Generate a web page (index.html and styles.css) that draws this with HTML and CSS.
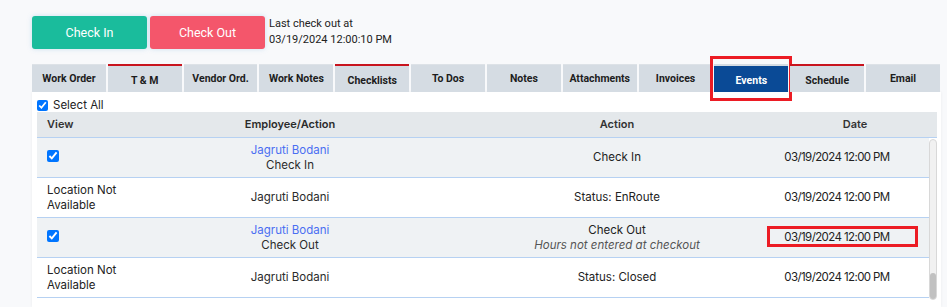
FILE: index.html
```html
<!DOCTYPE html>
<html>
<head>
    <title>Work Order Events</title>
    <link rel="stylesheet" href="styles.css">
</head>
<body>
    <div class="page">
        <div class="check-bar">
            <button class="btn btn-in">Check In</button>
            <button class="btn btn-out">Check Out</button>
            <div class="last-check">Last check out at<br>03/19/2024 12:00:10 PM</div>
        </div>

        <div class="tabs">
            <div class="tab">Work Order</div>
            <div class="tab flagged">T &amp; M</div>
            <div class="tab">Vendor Ord.</div>
            <div class="tab">Work Notes</div>
            <div class="tab flagged">Checklists</div>
            <div class="tab">To Dos</div>
            <div class="tab">Notes</div>
            <div class="tab">Attachments</div>
            <div class="tab">Invoices</div>
            <div class="tab active">Events<span class="mark mark-tab"></span></div>
            <div class="tab flagged">Schedule</div>
            <div class="tab">Email</div>
        </div>

        <div class="panel">
            <label class="select-all"><input type="checkbox" checked> Select All</label>
            <div class="table">
                <div class="row head">
                    <div class="c-view">View</div>
                    <div class="c-emp">Employee/Action</div>
                    <div class="c-act">Action</div>
                    <div class="c-date">Date</div>
                </div>
                <div class="body">
                    <div class="rows">
                        <div class="row alt">
                            <div class="c-view"><input type="checkbox" checked></div>
                            <div class="c-emp"><span class="link">Jagruti Bodani</span><br>Check In</div>
                            <div class="c-act">Check In</div>
                            <div class="c-date">03/19/2024 12:00 PM</div>
                        </div>
                        <div class="row">
                            <div class="c-view">Location Not<br>Available</div>
                            <div class="c-emp">Jagruti Bodani</div>
                            <div class="c-act">Status: EnRoute</div>
                            <div class="c-date">03/19/2024 12:00 PM</div>
                        </div>
                        <div class="row alt">
                            <div class="c-view"><input type="checkbox" checked></div>
                            <div class="c-emp"><span class="link">Jagruti Bodani</span><br>Check Out</div>
                            <div class="c-act">Check Out<br><i>Hours not entered at checkout</i></div>
                            <div class="c-date"><span class="marked">03/19/2024 12:00 PM<span class="mark mark-date"></span></span></div>
                        </div>
                        <div class="row">
                            <div class="c-view">Location Not<br>Available</div>
                            <div class="c-emp">Jagruti Bodani</div>
                            <div class="c-act">Status: Closed</div>
                            <div class="c-date">03/19/2024 12:00 PM</div>
                        </div>
                    </div>
                    <div class="scrollbar"><div class="thumb"></div></div>
                </div>
            </div>
        </div>
    </div>
</body>
</html>
```

FILE: styles.css
```css
body {
    margin: 0;
    padding: 0;
    background-color: #f8f9fb;
    font-family: "Inter", "Noto Sans", sans-serif;
    color: #222;
}

.page {
    padding: 16px 6px 0 32px;
}

/* check in / out buttons */
.check-bar {
    display: flex;
    align-items: center;
    gap: 3px;
    height: 32px;
}

.btn {
    width: 115px;
    height: 33px;
    border: none;
    border-radius: 3px;
    color: #ffffff;
    font-family: Roboto, sans-serif;
    font-size: 12.5px;
    box-shadow: 0 0 5px rgba(120, 180, 220, 0.35);
}

.btn-in {
    background-color: #1abc9c;
}

.btn-out {
    background-color: #f4566b;
}

.last-check {
    margin-left: 1px;
    font-family: Roboto, sans-serif;
    font-size: 11px;
    line-height: 16px;
    color: #222;
}

/* tabs */
.tabs {
    display: flex;
    gap: 2px;
    margin-top: 16px;
    width: 908px;
}

.tab {
    position: relative;
    flex: 1;
    height: 28px;
    display: flex;
    align-items: center;
    justify-content: center;
    background-color: #d5dce3;
    font-family: Roboto, sans-serif;
    font-weight: bold;
    font-size: 10.5px;
    color: #1d1d1d;
    border-top: 1px solid #dde2e7;
    box-sizing: border-box;
}

.tab.flagged {
    border-top: 2px solid #c8141e;
    padding-top: 3px;
}

.tab.active {
    background-color: #0a4a96;
    color: #ffffff;
    border-top: 2px solid #d5dce3;
    padding-top: 3px;
}

/* red annotation boxes */
.mark {
    position: absolute;
    border: 3px solid #ec1c24;
}

.mark-tab {
    left: -4px;
    right: -4px;
    top: -10px;
    bottom: -9px;
}

.marked {
    position: relative;
}

.mark-date {
    left: -17px;
    right: -28px;
    top: -4px;
    bottom: -3px;
}

/* events panel */
.panel {
    width: 909px;
    background-color: #ffffff;
    padding: 6px 4px 7px 5px;
    box-sizing: border-box;
    box-shadow: 0 0 3px rgba(0, 0, 0, 0.06);
}

.select-all {
    display: flex;
    align-items: center;
    gap: 5px;
    font-size: 11.5px;
    height: 14px;
}

.select-all input {
    margin: 0;
    width: 11px;
    height: 11px;
}

.table {
    width: 900px;
    font-size: 11.5px;
}

.row {
    display: flex;
    align-items: center;
    height: 40px;
    border-bottom: 1px solid #b6d1f2;
    box-sizing: border-box;
    line-height: 15px;
}

.row.head {
    height: 26px;
    background-color: #e4e8eb;
    font-weight: 600;
    color: #333;
    font-size: 11px;
}

.row.alt {
    background-color: #eff2f4;
}

.body {
    display: flex;
}

.rows {
    flex: 1;
}

.c-view {
    width: 110px;
    flex-shrink: 0;
    padding-left: 10px;
    box-sizing: border-box;
}

.c-view input {
    margin: 0;
    width: 12px;
    height: 12px;
}

.c-emp {
    width: 286px;
    flex-shrink: 0;
    text-align: center;
    color: #2b2b2b;
}

.c-act {
    width: 312px;
    flex-shrink: 0;
    padding-left: 56px;
    box-sizing: border-box;
    text-align: center;
}

.c-act i {
    color: #555;
}

.c-date {
    flex: 1;
    text-align: center;
    white-space: nowrap;
    letter-spacing: -0.6px;
}

.row.head .c-date {
    padding-left: 28px;
    letter-spacing: 0;
}

.link {
    color: #4a6ef2;
}

.scrollbar {
    width: 8px;
    margin-top: 1px;
    height: 161px;
    background-color: #f1f1f1;
    border: 1px solid #d8d8d8;
    border-radius: 4px;
    box-sizing: border-box;
    display: flex;
    flex-direction: column;
    justify-content: flex-end;
}

.thumb {
    height: 26px;
    background-color: #c1c1c1;
    border-radius: 3px;
}
```
